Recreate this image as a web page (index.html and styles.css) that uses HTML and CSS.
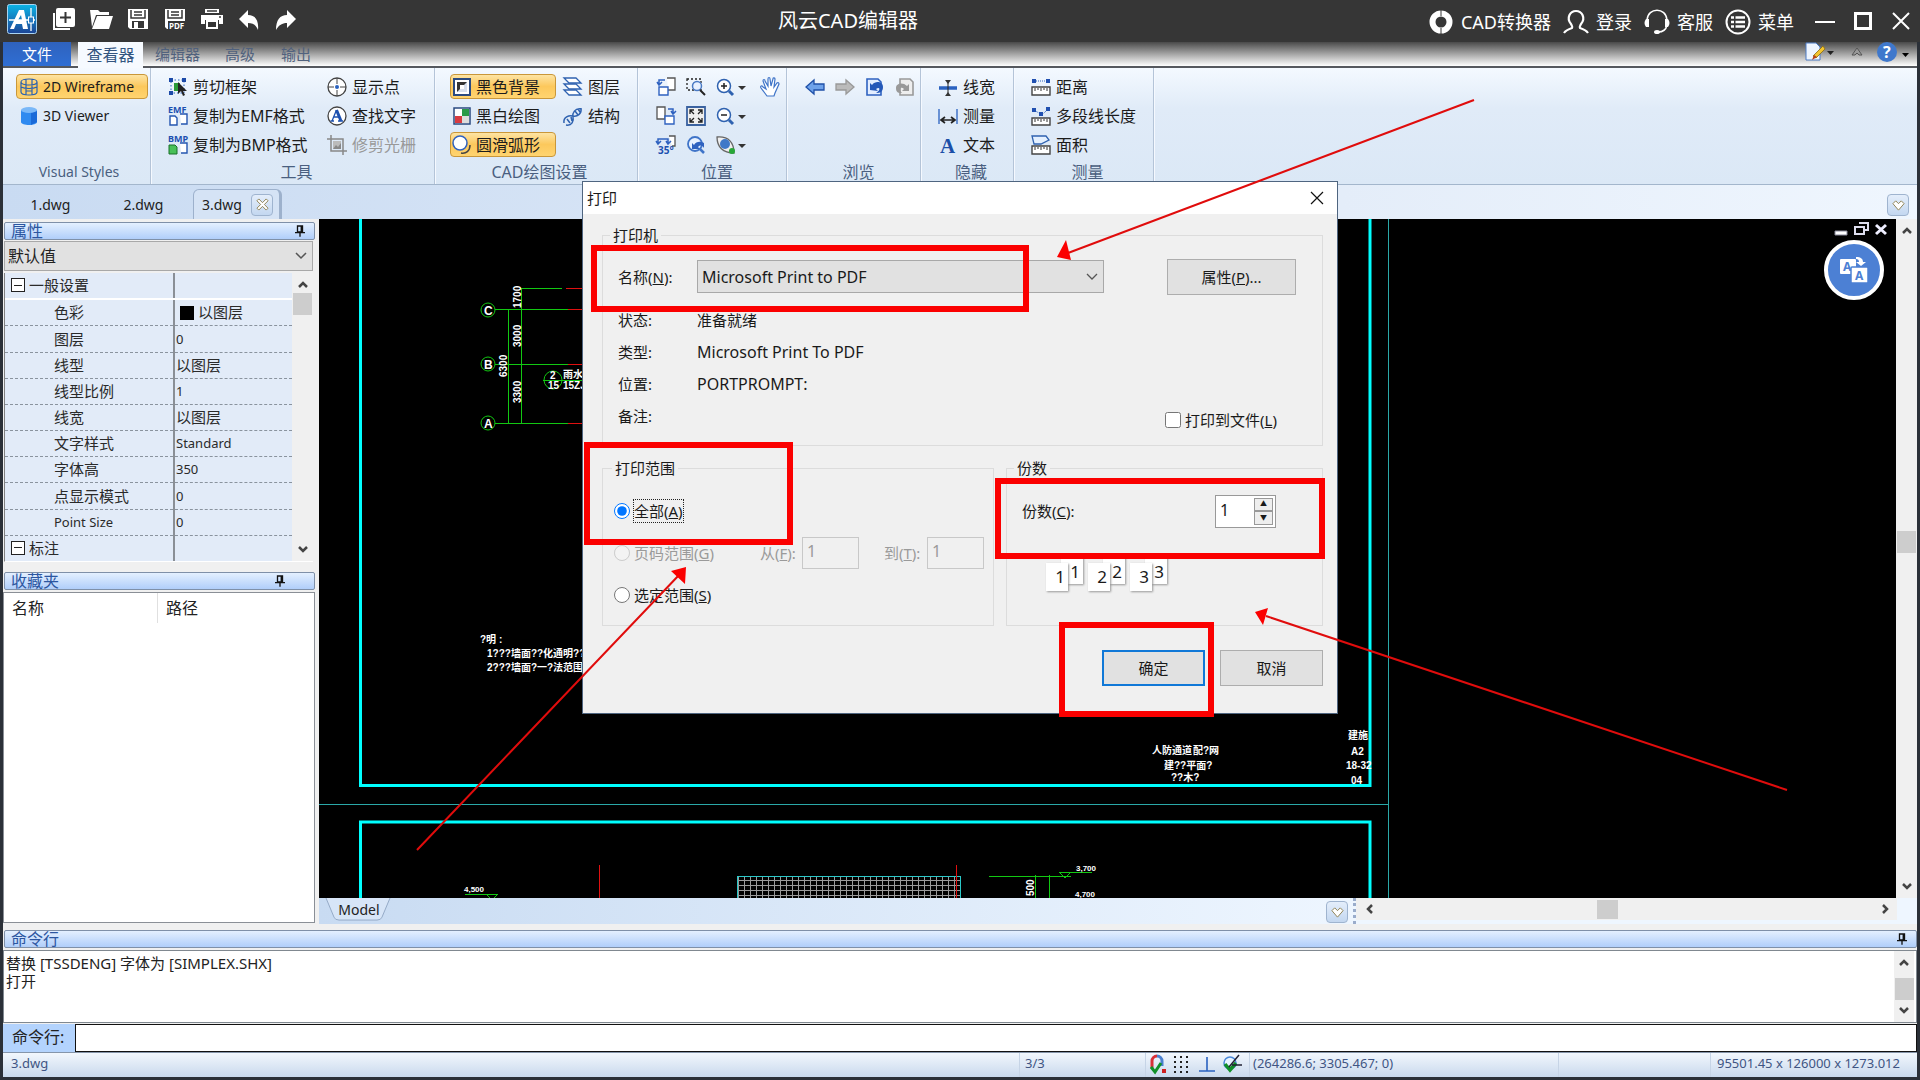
FILE: index.html
```html
<!DOCTYPE html>
<html lang="zh-CN">
<head>
<meta charset="utf-8">
<title>风云CAD编辑器</title>
<link rel="stylesheet" href="styles.css">
</head>
<body>
<header class="titlebar">
  <div class="quick">
    <svg class="logo" viewBox="0 0 30 30"><defs><linearGradient id="lg" x2="0" y2="1"><stop offset="0" stop-color="#0cb4e6"/><stop offset="1" stop-color="#1c4496"/></linearGradient></defs><rect x=".5" y=".5" width="29" height="29" rx="2" fill="url(#lg)" stroke="#a9d4f2"/><path d="M3 25 12 6h5l4 19h-5l-1-5H9l-2 5zM11 16h4l-1-5z" fill="#fff" fill-rule="evenodd"/><path d="M2 16h26M24 4v23" stroke="#fff" stroke-width="1.3"/><rect x="21.500" y="13" width="5" height="6" fill="#2a7cc4" stroke="#fff"/></svg>
    <button class="qbtn" aria-label="新建"><svg viewBox="0 0 24 24"><path d="M2 6v16h16" fill="none" stroke="#fff" stroke-width="2"/><rect x="4" y="1" width="19" height="19" rx="2" fill="#fff"/><path d="M13.500 5v11M8 10.500h11" stroke="#363636" stroke-width="2"/></svg></button>
    <button class="qbtn" aria-label="打开"><svg viewBox="0 0 24 24"><path d="M1 3h8l2 2h9v3H7L3 20z" fill="#fff"/><path d="M8 9h16l-4 13H3z" fill="#fff"/></svg></button>
    <button class="qbtn" aria-label="保存"><svg viewBox="0 0 24 24"><path d="M2 2h20v20H4l-2-2z" fill="#fff"/><path d="M5 3v8h14V3M8 5h8M8 8h8" fill="none" stroke="#363636" stroke-width="1.500"/><path d="M6 14h12v7H6z" fill="#363636"/><path d="M8 15h4v6H8z" fill="#fff"/></svg></button>
    <button class="qbtn" aria-label="保存为PDF"><svg viewBox="0 0 24 24"><path d="M2 2h20v20H4l-2-2z" fill="#fff"/><path d="M5 3v8h14V3M8 5h8M8 8h8" fill="none" stroke="#363636" stroke-width="1.500"/><path d="M5 14h17v8H5z" fill="#363636"/><text x="6" y="21.500" font-size="8" font-weight="700" fill="#fff">PDF</text></svg></button>
    <button class="qbtn" aria-label="打印"><svg viewBox="0 0 24 24"><path d="M5 2h14v4H5zM1 8h22v9h-4v-4H5v4H1z" fill="#fff"/><path d="M7 14h10v7H7z" fill="#363636" stroke="#fff" stroke-width="2"/><path d="M7 4h10M9 17h6M19 10h2" stroke="#363636" stroke-width="1.500"/></svg></button>
    <button class="qbtn" aria-label="撤销"><svg viewBox="0 0 24 24"><path d="M2 12 11 3v5c7 0 11 5 10 15-2-5-5-7-10-7v5z" fill="#fff"/></svg></button>
    <button class="qbtn" aria-label="重做"><svg viewBox="0 0 24 24"><path d="M22 12 13 3v5C6 8 2 13 2 23c3-5 6-7 11-7v5z" fill="#fff"/></svg></button>
  </div>
  <h1 class="apptitle">风云CAD编辑器</h1>
  <nav class="account">
    <button class="acct"><svg viewBox="0 0 26 26"><circle cx="13" cy="13" r="8.500" fill="none" stroke="#fff" stroke-width="6"/><path d="M13 1v6M13 19v6" stroke="#363636"/></svg>CAD转换器</button>
    <button class="acct"><svg viewBox="0 0 26 26"><path d="M1 24c2-3 5-4 8-5 1-1 0-2-1-4-5-6-1-13 5-13s10 7 5 13c-1 2-2 3-1 4 3 1 6 2 8 5" fill="none" stroke="#fff" stroke-width="2.200"/></svg>登录</button>
    <button class="acct"><svg viewBox="0 0 26 26"><path d="M3 11C4-2 22-2 23 11M23 16c-1 5-5 7-9 7" fill="none" stroke="#fff" stroke-width="1.500"/><path d="M2 10h3v8H2q-3-4 0-8M24 10h-3v8h3q3-4 0-8" fill="#fff"/><ellipse cx="13" cy="23" rx="3" ry="2" fill="#fff"/></svg>客服</button>
    <button class="acct"><svg viewBox="0 0 26 26"><circle cx="13" cy="13" r="11.500" fill="none" stroke="#fff" stroke-width="2"/><path d="M6 8.500h3M6 13h3M6 17.500h3M10.500 8.500H20M10.500 13H20M10.500 17.500H20" stroke="#fff" stroke-width="2.500"/></svg>菜单</button>
  </nav>
  <div class="winbtns">
    <button aria-label="最小化"><svg viewBox="0 0 20 20"><path d="M0 11h20" stroke="#fff" stroke-width="2"/></svg></button>
    <button aria-label="最大化"><svg viewBox="0 0 20 20"><path d="M2.500 2.500h15v15h-15z" fill="none" stroke="#fff" stroke-width="3"/></svg></button>
    <button aria-label="关闭"><svg viewBox="0 0 20 20"><path d="M2 2l16 16M18 2 2 18" stroke="#fff" stroke-width="2"/></svg></button>
  </div>
</header>

<div class="frame">
<nav class="menutabs">
  <button class="mt file">文件</button>
  <button class="mt active">查看器</button>
  <button class="mt">编辑器</button>
  <button class="mt">高级</button>
  <button class="mt">输出</button>
  <div class="mtools">
    <svg class="w28" viewBox="0 0 28 20"><path d="M1 1h10l4 4v13H1z" fill="#eef5ff" stroke="#4a7ac4"/><path d="M18 4l2 3-9 9-3-2z" fill="#f2c430" stroke="#8a6a10" stroke-width=".8"/><path d="M9 13l3 2-5 3z" fill="#b8401c"/><path d="M22 9h7l-3.500 4z" fill="#222"/></svg>
    <svg class="w12" viewBox="0 0 12 20"><path d="M1 13l5-7 5 7H8l-2-2-2 2z" fill="#999" stroke="#555"/></svg>
    <svg class="w34 help" viewBox="0 0 34 22"><circle cx="12" cy="10" r="10" fill="#3f78cc"/><text x="8" y="16" font-size="16" font-weight="700" fill="#fff">?</text><path d="M27 11h7l-3.500 4z" fill="#000"/></svg>
  </div>
</nav>

<section class="ribbon">
  <div class="group g1">
    <div class="cols"><div class="col">
      <button class="rb on wide"><svg viewBox="0 0 20 20"><path d="M2 5v10c0 4 16 4 16 0V5M2 5c0-4 16-4 16 0s-16 4-16 0M7 2v16M13 2v16M2 10c4 2 12 2 16 0M7 8h6v6H7z" fill="none" stroke="#2a62b0" stroke-width="1.200"/></svg><span>2D Wireframe</span></button>
      <button class="rb wide"><svg viewBox="0 0 20 20"><path d="M2 4v12c0 4 16 4 16 0V4z" fill="#2f8af0"/><path d="M12 5h6v11l-6 3z" fill="#1a6ad8"/><ellipse cx="10" cy="4" rx="8" ry="3" fill="#7ab8f8"/></svg><span>3D Viewer</span></button>
    </div></div>
    <div class="glabel">Visual Styles</div>
  </div>
  <div class="group g2">
    <div class="cols"><div class="col">
      <button class="rb"><svg viewBox="0 0 20 20"><path d="M3 3h13v13H3z" fill="none" stroke="#2a62c0" stroke-dasharray="1.500 2"/><path d="M1 1h4v4H1zM14 1h4v4h-4zM1 14h4v4H1z" fill="#1c4aa8"/><path d="M6 6h6v8H6z" fill="#2a9a38"/><path d="M10 5v12l3-3 2 5 2-1-2-4h4z" fill="#222"/></svg><span>剪切框架</span></button>
      <button class="rb"><svg viewBox="0 0 20 20"><text x="0" y="7" font-size="9" font-weight="700" fill="#1c50b0">EMF</text><path d="M2 10h5l2 2v7H2zM12 8h7v10h-6" fill="#fff" stroke="#2455b0" stroke-width="1.400"/></svg><span>复制为EMF格式</span></button>
      <button class="rb"><svg viewBox="0 0 20 20"><text x="0" y="7" font-size="9" font-weight="700" fill="#1c50b0">BMP</text><path d="M12 8h7v10h-6" fill="#fff" stroke="#2455b0" stroke-width="1.400"/><path d="M1 10h6l2 2v7H1z" fill="#48c058" stroke="#187028"/></svg><span>复制为BMP格式</span></button>
    </div><div class="col">
      <button class="rb"><svg viewBox="0 0 20 20"><circle cx="10" cy="10" r="9" fill="#fff" stroke="#444" stroke-width="1.300"/><path d="M10 1v6M10 13v6M1 10h6M13 10h6" stroke="#444"/><circle cx="10" cy="10" r="2" fill="#2a62c0"/></svg><span>显示点</span></button>
      <button class="rb"><svg viewBox="0 0 20 20"><circle cx="10" cy="10" r="9" fill="#fff" stroke="#444" stroke-width="1.300"/><path d="M5 15 9.500 4M3.500 15h3.500M11 15h5M6.500 11h6" fill="none" stroke="#1c50b0" stroke-width="1.300"/><path d="M9.500 4l4.500 11" stroke="#1c50b0" stroke-width="3"/></svg><span>查找文字</span></button>
      <button class="rb" disabled><svg viewBox="0 0 20 20"><path d="M4 0v16h16M0 4h16v16" fill="none" stroke="#888" stroke-width="1.500"/><path d="M6 6h8v8H6z" fill="#bbb"/><path d="M6 14l3-4 2 2 3-4v6z" fill="#888"/></svg><span>修剪光栅</span></button>
    </div></div>
    <div class="glabel cjk">工具</div>
  </div>
  <div class="group g3">
    <div class="cols"><div class="col">
      <button class="rb on mid"><svg viewBox="0 0 20 20"><path d="M2 2h16v16H2z" fill="#fff" stroke="#2a4a80" stroke-width="2"/><path d="M5 5h10v10H5z" fill="#333"/><path d="M15 5v10H5z" fill="#d8e0ee"/><path d="M8 8h4v4H8z" fill="#fff"/></svg><span>黑色背景</span></button>
      <button class="rb mid"><svg viewBox="0 0 20 20"><path d="M2 2h16v16H2z" fill="#fff" stroke="#2a4a80" stroke-width="1.500"/><path d="M10 3h7v7h-7z" fill="#2a9a48"/><path d="M3 10h7v7H3z" fill="#d83a40"/><path d="M10 10h7v7h-7z" fill="#ddd"/></svg><span>黑白绘图</span></button>
      <button class="rb on mid"><svg viewBox="0 0 20 20"><circle cx="8" cy="8" r="7" fill="#fff" stroke="#2f62c0" stroke-width="1.500"/><path d="M18 10c0 6-4 9-9 8" fill="none" stroke="#444" stroke-width="1.500"/></svg><span>圆滑弧形</span></button>
    </div><div class="col">
      <button class="rb"><svg viewBox="0 0 20 20"><g fill="#fff" stroke="#2f62b0" stroke-width="1.300"><path d="M1 13h12l5 5H6z"/><path d="M1 7h12l5 5H6z"/><path d="M1 1h12l5 5H6z"/></g></svg><span>图层</span></button>
      <button class="rb"><svg viewBox="0 0 20 20"><path d="M1 17c-1-6 5-8 9-7s9-2 8-8M3 19c6 1 8-4 7-8s2-9 8-8M4 13l3 4M8 11l1 4M12 5l3 4M15 3l2 3" fill="none" stroke="#2f62b0" stroke-width="1.500"/></svg><span>结构</span></button>
    </div></div>
    <div class="glabel cjk">CAD绘图设置</div>
  </div>
  <div class="group g4">
    <div class="icongrid">
      <button class="ib" aria-label="旋转"><svg viewBox="0 0 20 20"><path d="M11 1h8v12h-7" fill="#fff" stroke="#555" stroke-width="1.300"/><path d="M3 10h9v8H3z" fill="#fff" stroke="#2f62c0" stroke-width="1.400"/><path d="M9 3H3v5M1 5l2 3 3-3" fill="none" stroke="#2f62c0" stroke-width="1.500"/></svg></button>
      <button class="ib" aria-label="窗口缩放"><svg viewBox="0 0 20 20"><path d="M1 2h14v11H1z" fill="none" stroke="#222" stroke-width="1.300" stroke-dasharray="2"/><circle cx="11" cy="9" r="4.500" fill="#e8f1ff" stroke="#4a7ac4" stroke-width="1.500"/><path d="M14 13l5 5" stroke="#222" stroke-width="2"/></svg></button>
      <button class="ib" aria-label="放大"><svg class="w30" viewBox="0 0 30 20"><circle cx="8" cy="9" r="6.500" fill="#fff" stroke="#2f62b0" stroke-width="1.500"/><path d="M5 9h6M8 6v6" stroke="#222" stroke-width="1.500"/><path d="M13 14l4 4" stroke="#2f62b0" stroke-width="3"/><path d="M22 9h8l-4 4z" fill="#333"/></svg></button>
      <button class="ib" aria-label="平移"><svg viewBox="0 0 20 20"><path d="M7 19 1 11c-1-2 1-3 2-1l3 2L3 4c0-2 2-2 2 0l3 5V2c0-2 2-2 2 0l1 7 2-7c0-2 2-1 2 0l-1 8 3-4c1-1 2 0 2 1l-4 9-1 3z" fill="#fff" stroke="#3f74c8" stroke-width="1.200"/></svg></button>
      <button class="ib" aria-label="翻转"><svg viewBox="0 0 20 20"><path d="M1 1h8v12H1z" fill="#fff" stroke="#555" stroke-width="1.300"/><path d="M9 10h9v8H9z" fill="#fff" stroke="#2f62c0" stroke-width="1.400"/><path d="M12 3h5v4M15 5l2 3 3-3" fill="none" stroke="#2f62c0" stroke-width="1.500"/></svg></button>
      <button class="ib" aria-label="适应窗口"><svg viewBox="0 0 20 20"><path d="M1 1h18v18H1z" fill="#eee" stroke="#3a62a0" stroke-width="1.800"/><path d="M4 8V4h4M12 4h4v4M16 12v4h-4M8 16H4v-4M4 4l4 4M16 4l-4 4M16 16l-4-4M4 16l4-4" fill="none" stroke="#222" stroke-width="1.300"/></svg></button>
      <button class="ib" aria-label="缩小"><svg class="w30" viewBox="0 0 30 20"><circle cx="8" cy="9" r="6.500" fill="#fff" stroke="#2f62b0" stroke-width="1.500"/><path d="M5 9h6" stroke="#222" stroke-width="1.500"/><path d="M13 14l4 4" stroke="#2f62b0" stroke-width="3"/><path d="M22 9h8l-4 4z" fill="#333"/></svg></button>
      <span></span>
      <button class="ib" aria-label="旋转35度"><svg viewBox="0 0 20 20"><path d="M13 1h6v10h-3" fill="#fff" stroke="#555" stroke-width="1.300"/><path d="M2 8V4h10v4M0 6l2 3 3-3M10 6l2 3 3-3" fill="none" stroke="#2f62c0" stroke-width="1.500"/><text x="2" y="19" font-size="10" font-weight="700" fill="#1c50b0">35°</text></svg></button>
      <button class="ib" aria-label="上一视图"><svg viewBox="0 0 20 20"><circle cx="9" cy="9" r="7" fill="#e8f1ff" stroke="#3f74c8" stroke-width="1.800"/><path d="M6 14V8l2 2c2-4 7-4 10-2v5c-2-3-4-3-6-1l2 2z" fill="#2f62c0"/><path d="M14 14l4 4" stroke="#3f74c8" stroke-width="2.500"/></svg></button>
      <button class="ib" aria-label="三维动态"><svg class="w30" viewBox="0 0 30 20"><path d="M1 2c12-1 17 6 17 16C7 18 1 12 1 2z" fill="#eee" stroke="#666" stroke-width="1.300"/><circle cx="9" cy="9" r="5" fill="#3f78c8"/><circle cx="16" cy="16" r="3" fill="#28a838"/><path d="M22 9h8l-4 4z" fill="#333"/></svg></button>
    </div>
    <div class="glabel cjk">位置</div>
  </div>
  <div class="group g5">
    <div class="iconrow">
      <button class="ib" aria-label="后退"><svg viewBox="0 0 20 20"><path d="M1 10l8-7v4h10v6H9v4z" fill="#6ea2ea" stroke="#1f50a8" stroke-width="1.300"/></svg></button>
      <button class="ib" aria-label="前进"><svg viewBox="0 0 20 20"><path d="M19 10l-8-7v4H1v6h10v4z" fill="#bbb" stroke="#999" stroke-width="1.300"/></svg></button>
      <button class="ib" aria-label="返回视图"><svg viewBox="0 0 20 20"><path d="M2 2h11l3 3v13H2z" fill="#e4eeff" stroke="#2f62c0" stroke-width="1.600"/><path d="M5 13V6l2 2c4-5 11-3 11 2s-3 6-7 6c5-3 4-7 0-4l2 2z" fill="#2458b8"/></svg></button>
      <button class="ib" aria-label="下一视图"><svg viewBox="0 0 20 20"><path d="M5 2h10l3 3v13H5z" fill="#eee" stroke="#999" stroke-width="1.600"/><path d="M14 14V7l-2 2C8 5 1 6 1 11s3 5 6 5c-4-4-1-7 2-4l-2 2z" fill="#999"/></svg></button>
    </div>
    <div class="glabel cjk">浏览</div>
  </div>
  <div class="group g6">
    <div class="cols"><div class="col">
      <button class="rb"><svg viewBox="0 0 20 20"><path d="M1 11h18" stroke="#2a62c0" stroke-width="3.500"/><path d="M10 3v14" stroke="#222"/><path d="M7 3h6l-3 4zM7 19h6l-3-4z" fill="#333"/></svg><span>线宽</span></button>
      <button class="rb"><svg viewBox="0 0 20 20"><path d="M1 3v15M19 3v15" stroke="#2a62c0" stroke-width="1.300"/><path d="M4 14h12M7 11l-4 3 4 3M13 11l4 3-4 3" fill="none" stroke="#222" stroke-width="1.700"/></svg><span>测量</span></button>
      <button class="rb"><svg viewBox="0 0 20 20"><text class="serif" x="2" y="18" font-size="21" font-weight="700" fill="#1c4fa8">A</text></svg><span>文本</span></button>
    </div></div>
    <div class="glabel cjk">隐藏</div>
  </div>
  <div class="group g7">
    <div class="cols"><div class="col">
      <button class="rb"><svg viewBox="0 0 20 20"><path d="M1 10h18v8H1z" fill="#fff" stroke="#444" stroke-width="1.400"/><path d="M4 14v-3M7 13v-2M10 14v-3M13 13v-2M16 14v-3" stroke="#333"/><path d="M3 4h14" stroke="#2a62c0" stroke-dasharray="1 1"/><path d="M1 2h4v4H1zM15 2h4v4h-4z" fill="#2050b0"/></svg><span>距离</span></button>
      <button class="rb"><svg viewBox="0 0 20 20"><path d="M1 12h18v7H1z" fill="#fff" stroke="#444" stroke-width="1.400"/><path d="M4 16v-3M7 15v-2M10 16v-3M13 15v-2M16 16v-3" stroke="#333"/><path d="M3 4l8 5 6-6" fill="none" stroke="#2a62c0" stroke-dasharray="1 1"/><path d="M1 2h4v4H1zM15 1h4v4h-4zM8 6h4v4H8z" fill="#2050b0"/></svg><span>多段线长度</span></button>
      <button class="rb"><svg viewBox="0 0 20 20"><path d="M1 11h18v8H1z" fill="#fff" stroke="#444" stroke-width="1.400"/><path d="M4 15v-3M7 14v-2M10 15v-3M13 14v-2M16 15v-3" stroke="#333"/><path d="M1 1h14l3 4-8 4H3z" fill="#e4f0ff" stroke="#2f62b0" stroke-width="1.300"/></svg><span>面积</span></button>
    </div></div>
    <div class="glabel cjk">测量</div>
  </div>
</section>

<nav class="doctabs">
  <button class="dt">1.dwg</button>
  <button class="dt">2.dwg</button>
  <div class="dt cur"><span>3.dwg</span><button class="sq" aria-label="关闭 3.dwg"><svg viewBox="0 0 14 14"><path d="M1 3l2-2 4 4 4-4 2 2-4 4 4 4-2 2-4-4-4 4-2-2 4-4z" fill="#fff" stroke="#8a7c4c"/></svg></button></div>
  <button class="sq end" aria-label="文档列表"><svg viewBox="0 0 14 14"><path d="M1 5l3-3 3 3 3-3 3 3-6 7z" fill="#fff" stroke="#8a7c4c"/></svg></button>
</nav>

<main class="work">
  <aside class="side">
    <h2 class="phead">属性<svg class="pin" viewBox="0 0 12 16"><path d="M3 2h6v7H3zM7.500 2v7M0 10h12M6 10v5" fill="none" stroke="#111" stroke-width="1.600"/></svg></h2>
    <div class="combo"><select aria-label="对象"><option>默认值</option></select><svg viewBox="0 0 12 8"><path d="M1 1l5 5 5-5" fill="none" stroke="#555" stroke-width="1.500"/></svg></div>
    <div class="props">
      <table>
        <tr class="sec first"><th><i class="minus"></i>一般设置</th><td></td></tr>
        <tr><th>色彩</th><td><i class="sw"></i>以图层</td></tr>
        <tr><th>图层</th><td class="lat">0</td></tr>
        <tr><th>线型</th><td>以图层</td></tr>
        <tr><th>线型比例</th><td class="lat">1</td></tr>
        <tr><th>线宽</th><td>以图层</td></tr>
        <tr><th>文字样式</th><td class="lat">Standard</td></tr>
        <tr><th>字体高</th><td class="lat">350</td></tr>
        <tr><th>点显示模式</th><td class="lat">0</td></tr>
        <tr><th class="lat">Point Size</th><td class="lat">0</td></tr>
        <tr class="sec"><th><i class="minus"></i>标注</th><td></td></tr>
      </table>
      <div class="vs"><svg viewBox="0 0 12 8"><path d="M2 7l4-4 4 4" fill="none" stroke="#444" stroke-width="2.500"/></svg><i class="thumb"></i><b></b><svg viewBox="0 0 12 8"><path d="M2 1l4 4 4-4" fill="none" stroke="#444" stroke-width="2.500"/></svg></div>
    </div>
    <h2 class="phead fav">收藏夹<svg class="pin" viewBox="0 0 12 16"><path d="M3 2h6v7H3zM7.500 2v7M0 10h12M6 10v5" fill="none" stroke="#111" stroke-width="1.600"/></svg></h2>
    <div class="favs"><div class="favh"><span>名称</span><span>路径</span></div></div>
  </aside>

  <div class="stage">
    <div class="canvasrow">
      <div class="canvas">
        <svg class="cad">
          <defs><pattern id="hatch" width="6" height="5" patternUnits="userSpaceOnUse"><path d="M0 .5h6M.5 0v5" stroke="#9a9a9a" fill="none"/></pattern></defs>
          <g transform="translate(-319 -219)">
            <g fill="none" stroke="#0ff">
              <path d="M360.500 210V785.500H1370V210" stroke-width="3"/>
              <path d="M360.500 900V822H1370V900" stroke-width="3"/>
              <path d="M319 804.500H1388.500M1388.500 210V900" stroke="#2aa8a8"/>
            </g>
            <g fill="none" stroke="#12c812">
              <circle cx="488" cy="310" r="7"/><circle cx="488" cy="364" r="7"/><circle cx="488" cy="423" r="7"/><circle cx="553" cy="380" r="9"/>
              <path d="M495 309.500h73M495 364.500h73M495 423.500h73M520 288.500h42M508.500 309v114M521.500 288v135M543 380.500h42"/>
              <path d="M989 876.500h82M1035.500 875v25M1049.500 875v25M1059 872.500h33M1060 873l5 5 5-5M465 894.500h33M487 895l5 5 5-5"/>
            </g>
            <path d="M566 288.500h20M568 309.500h18M568 364.500h18M568 423.500h18M599.500 865v35" stroke="#e01010"/>
            <rect x="737.500" y="876.500" width="223" height="30" fill="url(#hatch)" stroke="#2ac8c8"/>
            <path d="M956.500 865v35" stroke="#e01010"/>
            <g class="cadtext">
              <text class="big" x="484" y="315">C</text><text class="big" x="484" y="369">B</text><text class="big" x="484" y="428">A</text>
              <text transform="translate(521 308) rotate(-90)">1700</text>
              <text transform="translate(521 347) rotate(-90)">3000</text>
              <text transform="translate(507 377) rotate(-90)">6300</text>
              <text transform="translate(521 403) rotate(-90)">3300</text>
              <text x="550" y="379">2</text><text x="548" y="389">15</text><text x="563" y="378">雨水口</text><text x="563" y="389">15ZJ201</text>
              <text x="480" y="643">?明 :</text>
              <text x="487" y="657">1???墙面??化通明???墙面</text>
              <text x="487" y="671">2???墙面?一?法范围7J15</text>
              <text x="1152" y="754">人防通道</text><text x="1193" y="754">配?网</text>
              <text x="1164" y="769">建??平面?</text><text x="1171" y="781">??木?</text>
              <text x="1348" y="739">建施</text><text x="1351" y="755">A2</text><text x="1346" y="769">18-32</text><text x="1351" y="784">04</text>
              <text class="small" x="1076" y="871">3,700</text><text class="small" x="1075" y="897">4,700</text><text class="small" x="464" y="892">4,500</text>
              <text transform="translate(1034 896) rotate(-90)">500</text>
            </g>
          </g>
        </svg>
        <div class="mdi">
          <svg viewBox="0 0 54 14"><path d="M1 9h12v4H1z" fill="#fff" stroke="#889"/><path d="M25 1h9v7h-4M21 5h9v7h-9z" fill="none" stroke="#dde" stroke-width="2"/><path d="M42 3l10 9M52 3 42 12" stroke="#eef" stroke-width="3"/></svg>
          <button class="trans" aria-label="翻译"><svg viewBox="0 0 30 30"><rect x="1" y="4" width="16" height="15" rx="1" fill="#fff"/><text x="4" y="16" font-size="12" font-weight="700" fill="#4c80d4">A</text><path d="M17 2c5 0 7 2 7 5h3l-5 4-5-4h3c0-2-1-3-3-3z" fill="#fff"/><rect x="12" y="12" width="17" height="16" rx="1" fill="#fff" stroke="#4c80d4" stroke-width="1.500"/><text x="16" y="25" font-size="12" font-weight="700" fill="#4c80d4">A</text></svg></button>
        </div>
      </div>
      <div class="vs tall"><svg viewBox="0 0 12 8"><path d="M2 7l4-4 4 4" fill="none" stroke="#444" stroke-width="2.500"/></svg><b class="up"></b><i class="thumb"></i><b></b><svg viewBox="0 0 12 8"><path d="M2 1l4 4 4-4" fill="none" stroke="#444" stroke-width="2.500"/></svg></div>
    </div>
    <div class="sheetbar">
      <button class="sheet"><svg viewBox="0 0 66 24" preserveAspectRatio="none"><path d="M1 0 9 20q1 3 5 3h38q4 0 5-3L65 0" fill="#d7e5f7" stroke="#93a9c6"/></svg><span>Model</span></button>
      <button class="sq" aria-label="布局列表"><svg viewBox="0 0 14 14"><path d="M1 5l3-3 3 3 3-3 3 3-6 7z" fill="#fff" stroke="#8a7c4c"/></svg></button>
      <i class="grip"></i>
      <div class="hs"><svg viewBox="0 0 8 12"><path d="M7 2 3 6l4 4" fill="none" stroke="#444" stroke-width="2.500"/></svg><b></b><i></i><b></b><svg viewBox="0 0 8 12"><path d="M1 2l4 4-4 4" fill="none" stroke="#444" stroke-width="2.500"/></svg></div>
    </div>
  </div>
</main>

<section class="cmd">
  <h2 class="phead">命令行<svg class="pin" viewBox="0 0 12 16"><path d="M3 2h6v7H3zM7.500 2v7M0 10h12M6 10v5" fill="none" stroke="#111" stroke-width="1.600"/></svg></h2>
  <div class="log"><div class="lines"><div>替换 [TSSDENG] 字体为 [SIMPLEX.SHX]</div><div>打开</div></div>
    <div class="vs"><svg viewBox="0 0 12 8"><path d="M2 7l4-4 4 4" fill="none" stroke="#444" stroke-width="2.500"/></svg><b></b><i class="thumb"></i><svg viewBox="0 0 12 8"><path d="M2 1l4 4 4-4" fill="none" stroke="#444" stroke-width="2.500"/></svg></div>
  </div>
  <div class="prompt"><label for="cmdin">命令行:</label><input id="cmdin" type="text"></div>
</section>

<footer class="status">
  <span class="s1">3.dwg</span>
  <span class="s2">3/3</span>
  <span class="s3">
    <svg viewBox="0 0 20 20"><path d="M5 14V7a5 5 0 0 1 5-5" fill="none" stroke="#d83038" stroke-width="3"/><path d="M10 2a5 5 0 0 1 5 5v5" fill="none" stroke="#4a80d0" stroke-width="3"/><path d="M4 13l4 5 6-9" fill="none" stroke="#109028" stroke-width="3"/><path d="M15 15h4v4h-4z" fill="#d02020"/></svg>
    <svg viewBox="0 0 20 20"><path d="M2 3h18M2 8h18M2 13h18M2 18h18" stroke="#222" stroke-width="2" stroke-dasharray="2 4"/></svg>
    <svg viewBox="0 0 20 20"><path d="M2 17h16M10 3v14" stroke="#2a62c0" stroke-width="1.600"/></svg>
    <svg viewBox="0 0 20 20"><circle cx="8" cy="9" r="6" fill="#e8f4ff" stroke="#4a88d8" stroke-width="1.500"/><path d="M3 10l5 6 6-7" fill="none" stroke="#109028" stroke-width="3.500"/><path d="M7 13 17 1M10 11h10" stroke="#223" stroke-width="1.500"/></svg>
  </span>
  <span class="s4">(264286.6; 3305.467; 0)</span>
  <span class="s5"></span>
  <span class="s6">95501.45 x 126000 x 1273.012</span>
</footer>
</div>

<form class="dialog" role="dialog" aria-label="打印">
  <div class="dtitle"><span>打印</span><button type="button" aria-label="关闭"><svg viewBox="0 0 14 14"><path d="M1 1l12 12M13 1 1 13" stroke="#111" stroke-width="1.200"/></svg></button></div>
  <div class="dbody">
    <fieldset>
      <legend>打印机</legend>
      <div class="printer">
      <label for="pname">名称(<u>N</u>):</label>
      <div class="combo dsel"><select id="pname"><option>Microsoft Print to PDF</option></select><svg viewBox="0 0 12 8"><path d="M1 1l5 5 5-5" fill="none" stroke="#555" stroke-width="1.300"/></svg></div>
      <button type="button" class="dbtn prop">属性(<u>P</u>)...</button>
      <span class="k top">状态:</span><span class="v top cn">准备就绪</span>
      <span class="k">类型:</span><span class="v">Microsoft Print To PDF</span>
      <span class="k">位置:</span><span class="v">PORTPROMPT:</span>
      <span class="k">备注:</span><span class="v"></span>
      <label class="tofile"><input type="checkbox">打印到文件(<u>L</u>)</label>
      </div>
    </fieldset>
    <div class="two">
      <fieldset class="range">
        <legend>打印范围</legend>
        <div class="rr"><label><input type="radio" name="r" checked><span class="foc">全部(<u>A</u>)</span></label></div>
        <div class="rr off"><label class="pg"><input type="radio" name="r" disabled>页码范围(<u>G</u>)</label><label for="from" class="ft">从(<u>F</u>):</label><input id="from" class="num" type="text" value="1" disabled><label for="to" class="ft to">到(<u>T</u>):</label><input id="to" class="num" type="text" value="1" disabled></div>
        <div class="rr"><label><input type="radio" name="r">选定范围(<u>S</u>)</label></div>
      </fieldset>
      <fieldset class="copies">
        <legend>份数</legend>
        <div class="cr"><label for="cp">份数(<u>C</u>):</label><div class="spin"><input id="cp" type="text" value="1"><div><button type="button" aria-label="增加">▲</button><button type="button" aria-label="减少">▼</button></div></div></div>
        <div class="pages">
          <span class="pg2"><i class="back">1</i><i class="front">1</i></span>
          <span class="pg2"><i class="back">2</i><i class="front">2</i></span>
          <span class="pg2"><i class="back">3</i><i class="front">3</i></span>
        </div>
      </fieldset>
    </div>
    <div class="acts"><button type="button" class="dbtn ok">确定</button><button type="button" class="dbtn">取消</button></div>
  </div>
</form>

<svg class="marks">
  <g fill="none" stroke="#fb0000" stroke-width="6">
    <path d="M594 248h432v61H594zM587 445h203v97H587zM998 481h324v75H998zM1062 625h149v89h-149z"/>
  </g>
  <g stroke="#e00c0c" stroke-width="2"><path d="M1474 100 1068 253M417 850 680 574M1787 790 1266 616"/></g>
  <path d="M1057 257l9-17 5 20zM686 567l-15 4 14 13zM1255 612l13-4-5 17z" fill="#fb0000"/>
</svg>
</body>
</html>
```
FILE: styles.css
```css
* { box-sizing: border-box; }
body { margin: 0; min-height: 100vh; display: flex; flex-direction: column; position: relative; overflow-x: hidden; background: #2b3038; color: #222; font: 14px/20px "Noto Sans", "Noto Sans CJK SC", sans-serif; }
button, input, select { font: inherit; color: inherit; margin: 0; }
button { border: 0; background: none; padding: 0; }
svg { display: block; flex: none; overflow: visible; }
h1, h2 { margin: 0; font-weight: 400; }
fieldset { margin: 0; min-width: 0; }

/* title bar */
.titlebar { display: flex; align-items: center; height: 42px; padding: 0 9px 4px 7px; background: #363636; color: #fff; }
.quick { display: flex; align-items: center; gap: 13px; }
.logo { width: 30px; height: 30px; margin-right: 2px; }
.qbtn svg { width: 24px; height: 24px; }
.apptitle { flex: 1; text-align: center; font-size: 20px; line-height: 28px; margin-right: 30px; padding-top: 4px; }
.account { display: flex; gap: 12px; padding-top: 6px; }
.acct { display: flex; align-items: center; gap: 7px; font-size: 18px; line-height: 26px; }
.acct svg { width: 26px; height: 26px; }
.winbtns { display: flex; gap: 18px; padding: 4px 0 0 21px; }
.winbtns svg { width: 20px; height: 20px; }

.frame { flex: 1; display: flex; flex-direction: column; margin: 0 3px 3px; background: #f0f0f0; }

/* menu tabs */
.menutabs { display: flex; align-items: stretch; height: 26px; border-bottom: 2px solid #55585e; background: linear-gradient(#4a4a4a, #fff); }
.mt { padding: 0 13px; font-size: 15px; line-height: 22px; color: #51627e; }
.mt.file { width: 68px; margin-right: 7px; color: #fff; background: linear-gradient(#2f62bd, #2f6ed4); }
.mt.active { width: 65px; padding: 0; font-size: 16px; background: #f6faff; color: #33557f; margin-bottom: -2px; }
.mt.active + .mt { padding-left: 12px; padding-right: 12px; }
.mtools { display: flex; gap: 12px; margin-left: auto; }
.w28 { width: 28px; height: 20px; }
.w12 { width: 12px; height: 20px; margin-left: 6px; }
.w34 { width: 34px; height: 22px; margin-right: 8px; }

/* ribbon */
.ribbon { display: flex; height: 117px; background: linear-gradient(#f4f9ff, #e0ebf8 35%, #dbe8f6); border-bottom: 1px solid #a3b6cc; }
.group { display: flex; flex-direction: column; justify-content: space-between; padding: 6px 0 1px; border-right: 1px solid #b4c4d8; box-shadow: 1px 0 #f5f9ff; }
.g1 { width: 148px; padding-left: 13px; }
.g2 { width: 284px; padding-left: 16px; }
.g3 { width: 203px; padding-left: 15px; }
.g4 { width: 149px; padding-left: 18px; }
.g5 { width: 134px; padding-left: 18px; }
.g6 { width: 93px; padding-left: 16px; }
.g7 { width: 140px; padding-left: 16px; }
.cols { display: flex; }
.col { display: flex; flex-direction: column; gap: 4px; }
.g2 .col:first-child { width: 159px; }
.g3 .col:first-child { width: 112px; }
.rb { display: flex; align-items: center; gap: 5px; height: 25px; font-size: 16px; line-height: 22px; white-space: nowrap; border: 1px solid transparent; padding: 0; color: #1c1c1c; }
.rb svg { width: 20px; height: 20px; }
.rb.wide { width: 132px; padding-left: 2px; font-size: 14px; gap: 4px; }
.rb.mid { width: 106px; padding-left: 1px; gap: 4px; }
.rb.on { background: linear-gradient(#fde4a4, #fcc85c 50%, #ffd470); border-color: #c9973a; border-radius: 4px; }
.rb:disabled { color: #999; }
.glabel { text-align: center; font-size: 14px; line-height: 22px; color: #4a5f80; margin-left: -8px; }
.cjk { font-size: 16px; }
.icongrid { display: grid; grid-template-columns: 20px 20px 34px 20px; grid-auto-rows: 25px; column-gap: 10px; row-gap: 4px; align-items: center; }
.iconrow { display: flex; gap: 10px; padding-top: 3px; }
.ib svg { width: 20px; height: 20px; }
.ib svg.w30 { width: 30px; }
.serif { font-family: "Liberation Serif", serif; }

/* document tabs */
.doctabs { display: flex; align-items: stretch; height: 34px; padding: 4px 8px 0 0; background: linear-gradient(90deg, #c9dbf2, #e4edf9 70%, #eff6fe); }
.dt { width: 95px; text-align: center; line-height: 32px; }
.dt + .dt { padding-right: 4px; }
.dt.cur { display: flex; align-items: center; justify-content: space-between; width: 89px; padding: 0 6px 0 8px; border: 1px solid #9db1cc; border-right-width: 3px; border-bottom: 0; border-radius: 6px 6px 0 0; background: #d5e3f5; }
.sq { width: 22px; height: 22px; display: flex; align-items: center; justify-content: center; border: 1px solid #9fb4cf; border-radius: 4px; background: linear-gradient(#e4eefb, #c3d7f0); }
.sq svg { width: 13px; height: 13px; }
.sq.end { margin: 5px 0 0 auto; }

/* work area */
.work { flex: 1; display: flex; }
.side { width: 313px; margin-right: 3px; padding: 3px 1px 0; display: flex; flex-direction: column; }
.phead { display: flex; align-items: center; justify-content: space-between; height: 18px; padding: 0 9px 0 6px; border: 1px solid #7f90a8; border-radius: 2px; background: linear-gradient(#e4f0ff, #b0cefa); color: #2c56a0; font-size: 16px; line-height: 16px; }
.pin { width: 10px; height: 14px; }
.combo { display: flex; align-items: center; position: relative; height: 30px; margin: 1px 2px 2px 0; border: 1px solid #a8a8a8; background: #e1e1e1; }
.combo select { appearance: none; border: 0; background: none; flex: 1; height: 100%; padding: 0 30px 0 3px; font-size: 16px; }
.combo svg { position: absolute; right: 5px; width: 12px; height: 8px; pointer-events: none; }
.props { display: flex; height: 289px; margin-right: 2px; border-left: 1px solid #808080; background: #e2ebf8; border-bottom: 1px solid #fff; }
.props table { flex: 1; border-collapse: collapse; height: 288px; table-layout: fixed; color: #2a2a2a; }
.props th, .props td { padding: 0 0 1px; text-align: left; font-weight: 400; line-height: 20px; font-size: 15px; border-bottom: 1px dashed #8a939e; }
.props th { width: 169px; padding-left: 49px; border-right: 2px solid #8a8f96; }
.props td { padding-left: 1px; }
.props .lat { font-size: 13px; }
.props .sec th { padding-left: 6px; }
.props .first th, .props .first td { border-bottom: 2px solid #fff; }
.props tr:last-child th, .props tr:last-child td { border-bottom: 0; }
.minus { display: inline-block; width: 14px; height: 14px; margin-right: 4px; vertical-align: -1px; border: 1px solid #222; background: linear-gradient(#222, #222) center / 8px 1px no-repeat #fff; }
.sw { display: inline-block; width: 14px; height: 14px; margin: 0 4px; vertical-align: -2px; background: #000; }
.vs { width: 21px; display: flex; flex-direction: column; align-items: center; padding: 7px 0; background: #f0f0f0; }
.vs svg { width: 12px; height: 8px; }
.vs b, .hs b { flex: 1; }
.thumb { width: 19px; height: 22px; margin-top: 5px; background: #cdcdcd; }
.fav { margin-top: 10px; padding-right: 29px; }
.favs { flex: 1; margin: 2px 0 1px -1px; border: 1px solid #8a8f96; background: #fff; }
.favh { display: flex; line-height: 30px; font-size: 16px; }
.favh span { width: 154px; padding-left: 8px; border-right: 1px solid #e0e0e0; }
.favh span + span { border: 0; }

.stage { flex: 1; min-width: 0; display: flex; flex-direction: column; }
.canvasrow { flex: 1; display: flex; }
.canvas { flex: 1; position: relative; background: #000; overflow: hidden; }
.cad { position: absolute; inset: 0; width: 100%; height: 100%; overflow: hidden; }
.cadtext { fill: #fff; font-family: "Liberation Sans", "Noto Sans CJK SC", sans-serif; font-size: 10px; font-weight: 700; }
.cadtext .big { font-size: 12px; }
.cadtext .small { font-size: 8px; }
.mdi { position: absolute; top: 3px; right: 8px; display: flex; flex-direction: column; align-items: flex-end; gap: 4px; }
.mdi > svg { width: 54px; height: 14px; }
.trans { width: 60px; height: 60px; margin-right: 4px; border: 4px solid #fff; border-radius: 50%; background: #4c80d4; display: flex; align-items: center; justify-content: center; }
.trans svg { width: 30px; height: 30px; }
.tall .up { flex: 9 1 0; }
.tall b:not(.up) { flex: 10 1 0; }
.tall .thumb { margin: 0; }
.sheetbar { display: flex; height: 26px; background: linear-gradient(90deg, #c8dbf2, #eef6ff 65%); }
.sheet { position: relative; width: 74px; height: 23px; padding-left: 6px; }
.sheet svg { position: absolute; left: 6px; top: 0; width: 66px; height: 23px; }
.sheet span { position: relative; }
.sheetbar .sq { margin: 3px 5px 0 auto; }
.grip { border-left: 3px dotted #9aaccb; }
.hs { width: 541px; display: flex; align-items: center; margin: 0 20px 4px 0; padding: 0 7px 0 9px; background: #f0f0f0; }
.hs svg { width: 8px; height: 12px; }
.hs i { width: 21px; height: 19px; background: #cdcdcd; }
.hs b:nth-of-type(1) { flex: 22; }
.hs b:nth-of-type(2) { flex: 26; }

/* command line */
.cmd { margin-top: 6px; }
.cmd .phead { margin-left: 1px; }
.log { display: flex; height: 73px; margin-top: 2px; border: 1px solid #808890; background: #fff; }
.lines { flex: 1; padding: 3px 2px; font-size: 15px; line-height: 18px; }
.log .thumb { margin: 0 0 7px; }
.log .vs { width: 20px; margin-right: 2px; }
.prompt { display: flex; height: 28px; margin-top: 1px; }
.prompt label { width: 72px; padding-left: 9px; font-size: 16px; line-height: 26px; background: #b3d3fd; }
.prompt input { flex: 1; min-width: 0; border: 1px solid #111; background: #fff; }

/* status bar */
.status { display: flex; height: 25px; border-top: 1px solid #8595aa; background: linear-gradient(#f2f7fd, #c9d9ed); color: #3f5583; font-size: 13px; line-height: 21px; }
.status span { border-right: 1px solid #c6d4e6; }
.s1 { flex: 1; padding-left: 8px; }
.s2 { width: 126px; padding-left: 5px; }
.s3 { display: flex; gap: 5px; width: 104px; padding-left: 1px; }
.s3 svg { width: 20px; height: 20px; margin-top: 1px; }
.s4 { width: 309px; padding-left: 3px; }
.s5 { width: 152px; }
.status .s6 { width: 206px; padding-left: 6px; border: 0; }

/* print dialog */
.dialog { position: absolute; left: 582px; top: 181px; width: 756px; border: 1px solid #4f6580; background: #f0f0f0; font-size: 14px; color: #1a1a1a; }
.dtitle { display: flex; align-items: center; justify-content: space-between; height: 32px; padding: 0 13px 0 4px; background: #fff; font-size: 15px; }
.dtitle svg { width: 14px; height: 14px; }
.dbody { padding: 11px 14px 27px 19px; }
.dbody fieldset { border: 1px solid #dcdcdc; padding: 0; height: 221px; }
.dbody legend { margin-left: 7px; padding: 0 3px; line-height: 20px; font-size: 15px; }
.dbody label, .k { font-size: 15px; }
.printer { display: grid; grid-template-columns: 79px 407px 63px 1fr; grid-template-rows: 35px 42px 32px 32px 32px; align-items: center; padding: 14px 15px 0; }
.dsel { height: 33px; margin: 0; }
.dsel select { font-size: 16px; padding-left: 4px; }
.prop { grid-column: 4; }
.k { grid-column: 1; }
.v { grid-column: 2; font-size: 16px; }
.v.cn { font-size: 15px; }
.top { padding-top: 10px; }
.tofile { grid-column: 4; grid-row: 5; display: flex; align-items: center; white-space: nowrap; margin-top: 8px; }
.tofile input { width: 16px; height: 16px; margin: 0 4px 0 -2px; }
.dbtn { width: 103px; height: 36px; border: 1px solid #adadad; background: #e1e1e1; font-size: 15px; line-height: 30px; }
.dbtn.prop { width: 129px; }
.two { display: grid; grid-template-columns: 392px 1fr; column-gap: 12px; margin-top: 12px; }
.dbody .two fieldset { height: 168px; }
.dbody .range legend { margin-left: 9px; }
.range .rr { display: flex; align-items: center; height: 42px; padding-left: 11px; white-space: nowrap; }
.range legend + .rr { margin-top: 12px; }
.rr label { display: flex; align-items: center; }
.rr input[type=radio] { width: 16px; height: 16px; margin: 0 4px 0 0; }
.foc { outline: 1px dotted #222; line-height: 22px; }
.off { color: #9a9a9a; }
.pg { width: 146px; }
.ft { width: 42px; }
.to { margin-left: 25px; width: 43px; }
.num { width: 57px; height: 32px; padding: 0 4px 4px; border: 1px solid #c8c8c8; background: #f0f0f0; font-size: 16px; }
.cr { display: flex; align-items: center; justify-content: space-between; height: 34px; margin: 16px 46px 0 15px; }
.spin { display: flex; width: 61px; height: 33px; border: 1px solid #999; background: #fff; padding: 2px; }
.spin input { width: 36px; border: 0; padding: 0 2px 3px; background: none; font-size: 16px; }
.spin div { display: flex; flex-direction: column; flex: 1; }
.spin button { flex: 1; border: 1px solid #999; background: #eee; font-size: 7px; line-height: 10px; }
.pages { display: flex; gap: 5px; margin: 28px 0 0 39px; }
.pg2 { position: relative; width: 37px; height: 34px; }
.pg2 i { position: absolute; width: 22px; height: 28px; padding-right: 3px; text-align: right; font-style: normal; font-size: 17px; line-height: 32px; background: #fff; box-shadow: 1px 1px 2px #999; }
.pg2 .back { right: 0; top: 0; }
.pg2 .front { left: 0; top: 7px; line-height: 28px; }
.acts { display: flex; justify-content: flex-end; gap: 15px; margin-top: 24px; }
.ok { border: 2px solid #1078d7; }

/* red annotation marks */
.marks { position: absolute; left: 0; top: 0; width: 100%; height: 100%; pointer-events: none; }
```
